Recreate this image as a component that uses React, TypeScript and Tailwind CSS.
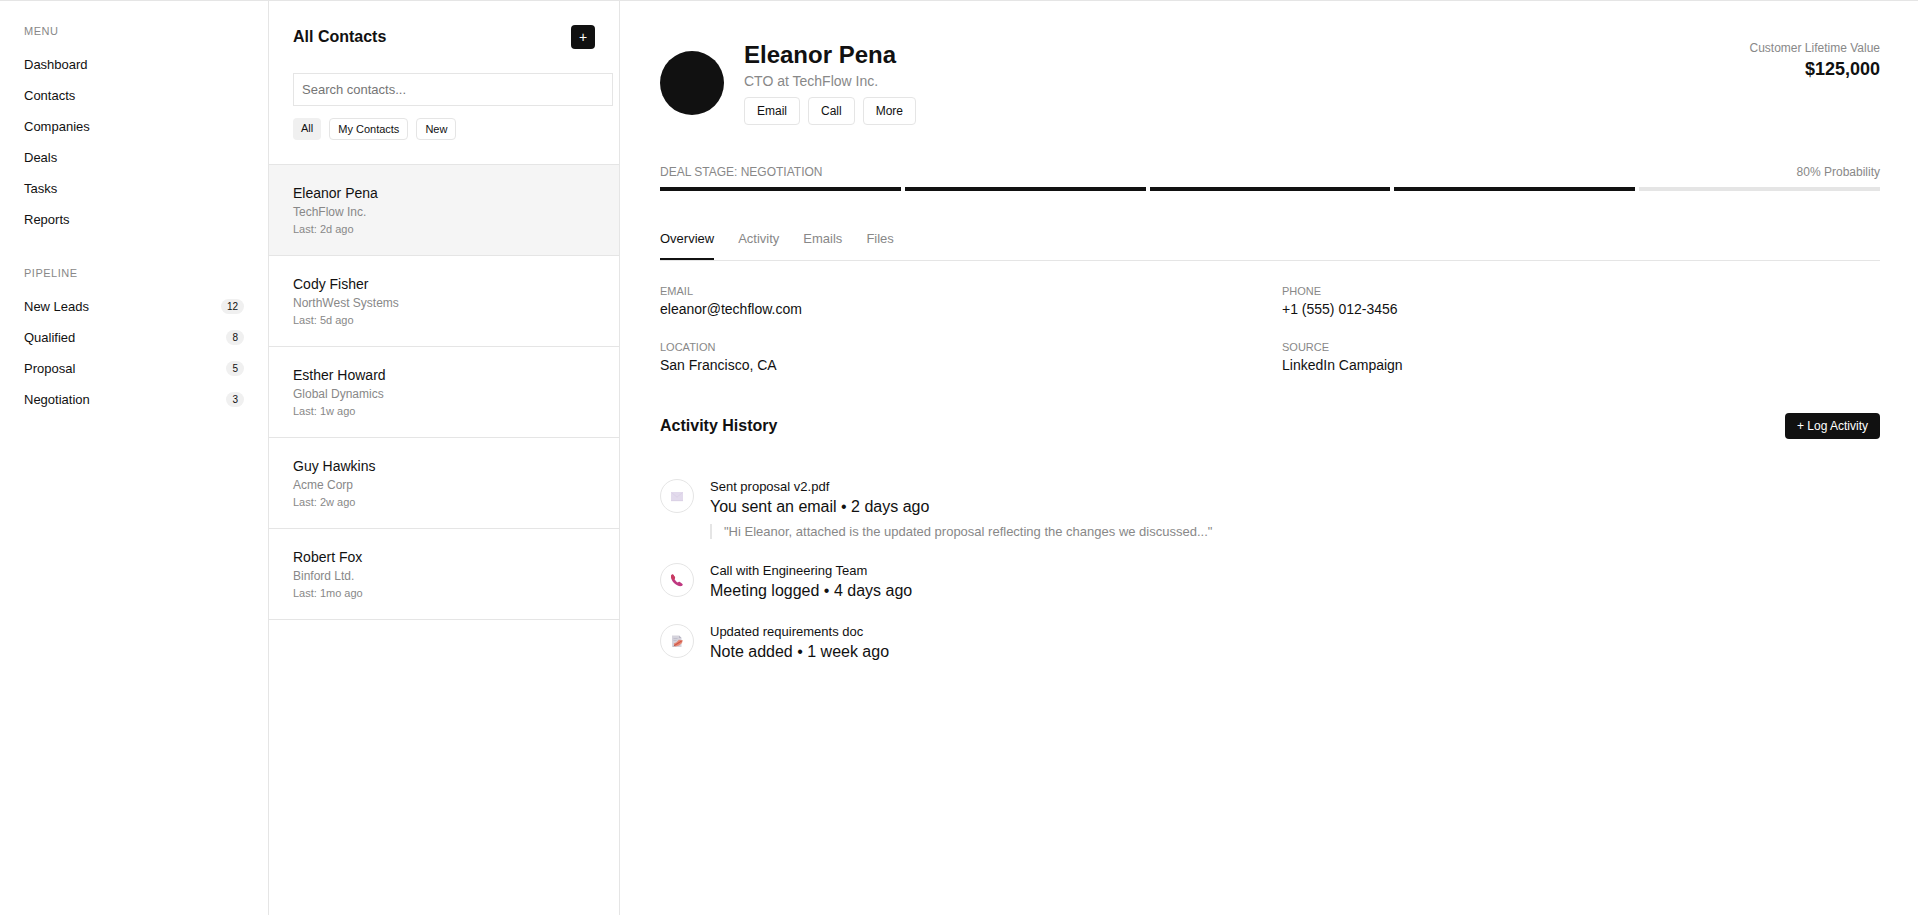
import type { ReactNode } from 'react';

const menu = ['Dashboard', 'Contacts', 'Companies', 'Deals', 'Tasks', 'Reports'];

const pipeline = [
  { label: 'New Leads', count: 12 },
  { label: 'Qualified', count: 8 },
  { label: 'Proposal', count: 5 },
  { label: 'Negotiation', count: 3 },
];

const contacts = [
  { name: 'Eleanor Pena', company: 'TechFlow Inc.', last: '2d ago' },
  { name: 'Cody Fisher', company: 'NorthWest Systems', last: '5d ago' },
  { name: 'Esther Howard', company: 'Global Dynamics', last: '1w ago' },
  { name: 'Guy Hawkins', company: 'Acme Corp', last: '2w ago' },
  { name: 'Robert Fox', company: 'Binford Ltd.', last: '1mo ago' },
];

const tabs = ['Overview', 'Activity', 'Emails', 'Files'];

const details = [
  { label: 'Email', value: 'eleanor@techflow.com' },
  { label: 'Phone', value: '+1 (555) 012-3456' },
  { label: 'Location', value: 'San Francisco, CA' },
  { label: 'Source', value: 'LinkedIn Campaign' },
];

function MailIcon() {
  return (
    <svg width="14" height="14" viewBox="0 0 14 14" aria-hidden="true">
      <rect x="1" y="3" width="12" height="9" rx="0.5" fill="#e2daec" />
      <path d="M1.3 3.4 7 8.2l5.7-4.8" fill="none" stroke="#d6cbe3" strokeWidth="0.6" />
      <path d="M1 11.7h12" stroke="#d3c9e0" strokeWidth="0.6" />
    </svg>
  );
}

function PhoneIcon() {
  return (
    <svg width="14" height="14" viewBox="0 0 14 14" aria-hidden="true">
      <path
        d="M1.1 2.7C1.5 1.7 2.6 1.2 3.3 1.8L5 4.3C5.3 5 4.9 5.5 4.5 6C5.1 7.4 6.4 8.8 7.9 9.6C8.4 9 9.1 8.6 9.9 9.1L12.5 11C13.1 11.6 12.5 12.7 11.5 13.1C9.5 13.7 6.3 12.4 4 10C1.8 7.7 0.6 4.8 1.1 2.7Z"
        fill="#bf3880"
      />
      <path d="M1.1 2.7C1.5 1.7 2.6 1.2 3.3 1.8L5 4.3C5.3 5 4.9 5.5 4.5 6L3 7.1C1.5 5.6 0.8 4 1.1 2.7Z" fill="#c93c60" />
    </svg>
  );
}

function NoteIcon() {
  return (
    <svg width="14" height="14" viewBox="0 0 14 14" aria-hidden="true">
      <path d="M2 1.5h7l2.5 2.5v9H2z" fill="#d5d3dc" />
      <path d="M9 1.5v2.5h2.5z" fill="#b7b4c2" />
      <path d="M3.5 4.5h4M3.5 6.5h3" stroke="#b9b6c4" strokeWidth="0.7" />
      <path d="M3.8 9.6 6.5 8.2 8.8 5.8 12.8 6.2 12 9 9.2 11.4 5.4 12.4 4.2 11.8z" fill="#e58a78" />
      <path d="M4.4 11.4 11.6 6.9" stroke="#cf5748" strokeWidth="1.2" />
      <path d="M3.4 12.4l.8-1.5.8 1.1z" fill="#8d5a55" />
    </svg>
  );
}

interface ActivityProps {
  icon: ReactNode;
  title: string;
  meta: string;
  quote?: string;
}

function ActivityItem({ icon, title, meta, quote }: ActivityProps) {
  return (
    <li className="flex items-start gap-4">
      <div className="flex size-[34px] shrink-0 items-center justify-center rounded-full border border-[#e5e5e5]">
        {icon}
      </div>
      <div>
        <div className="text-[13px] leading-[15px]">{title}</div>
        <div className="mt-1 text-[16px] leading-[18px]">{meta}</div>
        {quote && (
          <blockquote className="mt-2 border-l-2 border-[#e5e5e5] pl-3 text-[13px] leading-[15px] text-[#888]">
            {quote}
          </blockquote>
        )}
      </div>
    </li>
  );
}

function Sidebar() {
  return (
    <nav className="w-[269px] shrink-0 border-r border-[#e5e5e5] p-6">
      <h2 className="mb-3 text-[11px] leading-[12px] tracking-[0.5px] text-[#888] uppercase">Menu</h2>
      <ul className="mb-8">
        {menu.map((label) => (
          <li key={label}>
            <a href="#" className="block py-2 text-[13px] leading-[15px]">
              {label}
            </a>
          </li>
        ))}
      </ul>
      <h2 className="mb-3 text-[11px] leading-[12px] tracking-[0.5px] text-[#888] uppercase">Pipeline</h2>
      <ul>
        {pipeline.map(({ label, count }) => (
          <li key={label}>
            <a href="#" className="flex items-center justify-between py-2 text-[13px] leading-[15px]">
              {label}
              <span className="rounded-[10px] bg-[#f0f0f0] px-1.5 py-0.5 text-[10px] leading-[11px]">{count}</span>
            </a>
          </li>
        ))}
      </ul>
    </nav>
  );
}

function ContactList() {
  return (
    <section className="w-[351px] shrink-0 border-r border-[#e5e5e5]">
      <div className="border-b border-[#e5e5e5] p-6">
        <div className="mb-6 flex items-center justify-between">
          <h1 className="text-[16px] leading-[18px] font-bold">All Contacts</h1>
          <button
            type="button"
            aria-label="Add contact"
            className="flex size-6 items-center justify-center rounded bg-[#111] text-[14px] leading-[16px] text-white"
          >
            +
          </button>
        </div>
        {/* the search box runs past the header's right padding */}
        <div className="-mr-[18px]">
          <input
            type="text"
            aria-label="Search contacts"
            placeholder="Search contacts..."
            className="block h-[33px] w-full border border-[#e5e5e5] px-2 text-[13px] leading-[15px] placeholder:text-[#757575]"
          />
        </div>
        <div className="mt-3 flex gap-2 text-[11px] leading-[12px]">
          <button type="button" className="flex rounded bg-[#f0f0f0] px-2 py-1">
            All
          </button>
          <button type="button" className="flex rounded border border-[#e5e5e5] px-2 py-1">
            My Contacts
          </button>
          <button type="button" className="flex rounded border border-[#e5e5e5] px-2 py-1">
            New
          </button>
        </div>
      </div>
      <ul>
        {contacts.map(({ name, company, last }, i) => (
          <li
            key={name}
            className={`flex flex-col gap-1 border-b border-[#e5e5e5] px-6 py-5 ${i === 0 ? 'bg-[#f5f5f5]' : ''}`}
          >
            <div className="text-[14px] leading-[16px]">{name}</div>
            <div className="text-[12px] leading-[14px] text-[#888]">{company}</div>
            <div className="text-[11px] leading-[12px] text-[#888]">Last: {last}</div>
          </li>
        ))}
      </ul>
    </section>
  );
}

function ContactDetail() {
  return (
    <main className="min-w-0 flex-1 py-10 pr-[38px] pl-10">
      <header className="flex items-start justify-between">
        <div className="flex items-center gap-5">
          <div className="size-16 rounded-full bg-[#111]" />
          <div>
            <h2 className="text-[24px] leading-[28px] font-bold">Eleanor Pena</h2>
            <p className="mt-1 text-[14px] leading-[16px] text-[#888]">CTO at TechFlow Inc.</p>
            <div className="mt-2 flex gap-2">
              {['Email', 'Call', 'More'].map((label) => (
                <button
                  key={label}
                  type="button"
                  className="rounded border border-[#e5e5e5] px-3 py-1.5 text-[12px] leading-[14px]"
                >
                  {label}
                </button>
              ))}
            </div>
          </div>
        </div>
        <div className="text-right">
          <div className="text-[12px] leading-[14px] text-[#888]">Customer Lifetime Value</div>
          <div className="mt-1 text-[18px] leading-[20px] font-bold">$125,000</div>
        </div>
      </header>

      <section className="mt-10">
        <div className="flex justify-between text-[12px] leading-[14px] text-[#888]">
          <span>DEAL STAGE: NEGOTIATION</span>
          <span>80% Probability</span>
        </div>
        <div className="mt-2 flex gap-1">
          {[1, 2, 3, 4, 5].map((step) => (
            <div key={step} className={`h-1 flex-1 ${step <= 4 ? 'bg-[#111]' : 'bg-[#e5e5e5]'}`} />
          ))}
        </div>
      </section>

      <div role="tablist" className="mt-10 flex gap-6 border-b border-[#e5e5e5] text-[13px] leading-[15px]">
        {tabs.map((tab, i) => (
          <button
            key={tab}
            type="button"
            role="tab"
            aria-selected={i === 0}
            className={`border-b-2 pb-3 ${i === 0 ? 'border-[#111]' : 'border-transparent text-[#888]'}`}
          >
            {tab}
          </button>
        ))}
      </div>

      <dl className="mt-6 grid grid-cols-2 gap-6">
        {details.map(({ label, value }) => (
          <div key={label}>
            <dt className="text-[11px] leading-[12px] text-[#888] uppercase">{label}</dt>
            <dd className="mt-1 text-[14px] leading-[16px]">{value}</dd>
          </div>
        ))}
      </dl>

      <div className="mt-10 flex items-center justify-between">
        <h3 className="text-[16px] leading-[18px] font-bold">Activity History</h3>
        <button type="button" className="rounded bg-[#111] px-3 py-1.5 text-[12px] leading-[14px] text-white">
          + Log Activity
        </button>
      </div>

      <ul className="mt-10 flex flex-col gap-6">
        <ActivityItem
          icon={<MailIcon />}
          title="Sent proposal v2.pdf"
          meta="You sent an email • 2 days ago"
          quote={'"Hi Eleanor, attached is the updated proposal reflecting the changes we discussed..."'}
        />
        <ActivityItem icon={<PhoneIcon />} title="Call with Engineering Team" meta="Meeting logged • 4 days ago" />
        <ActivityItem icon={<NoteIcon />} title="Updated requirements doc" meta="Note added • 1 week ago" />
      </ul>
    </main>
  );
}

export default function App() {
  return (
    <div className="flex min-h-screen border-t border-[#e5e5e5] bg-white font-['Liberation_Sans',Arial,sans-serif] text-[#111]">
      <Sidebar />
      <ContactList />
      <ContactDetail />
    </div>
  );
}
